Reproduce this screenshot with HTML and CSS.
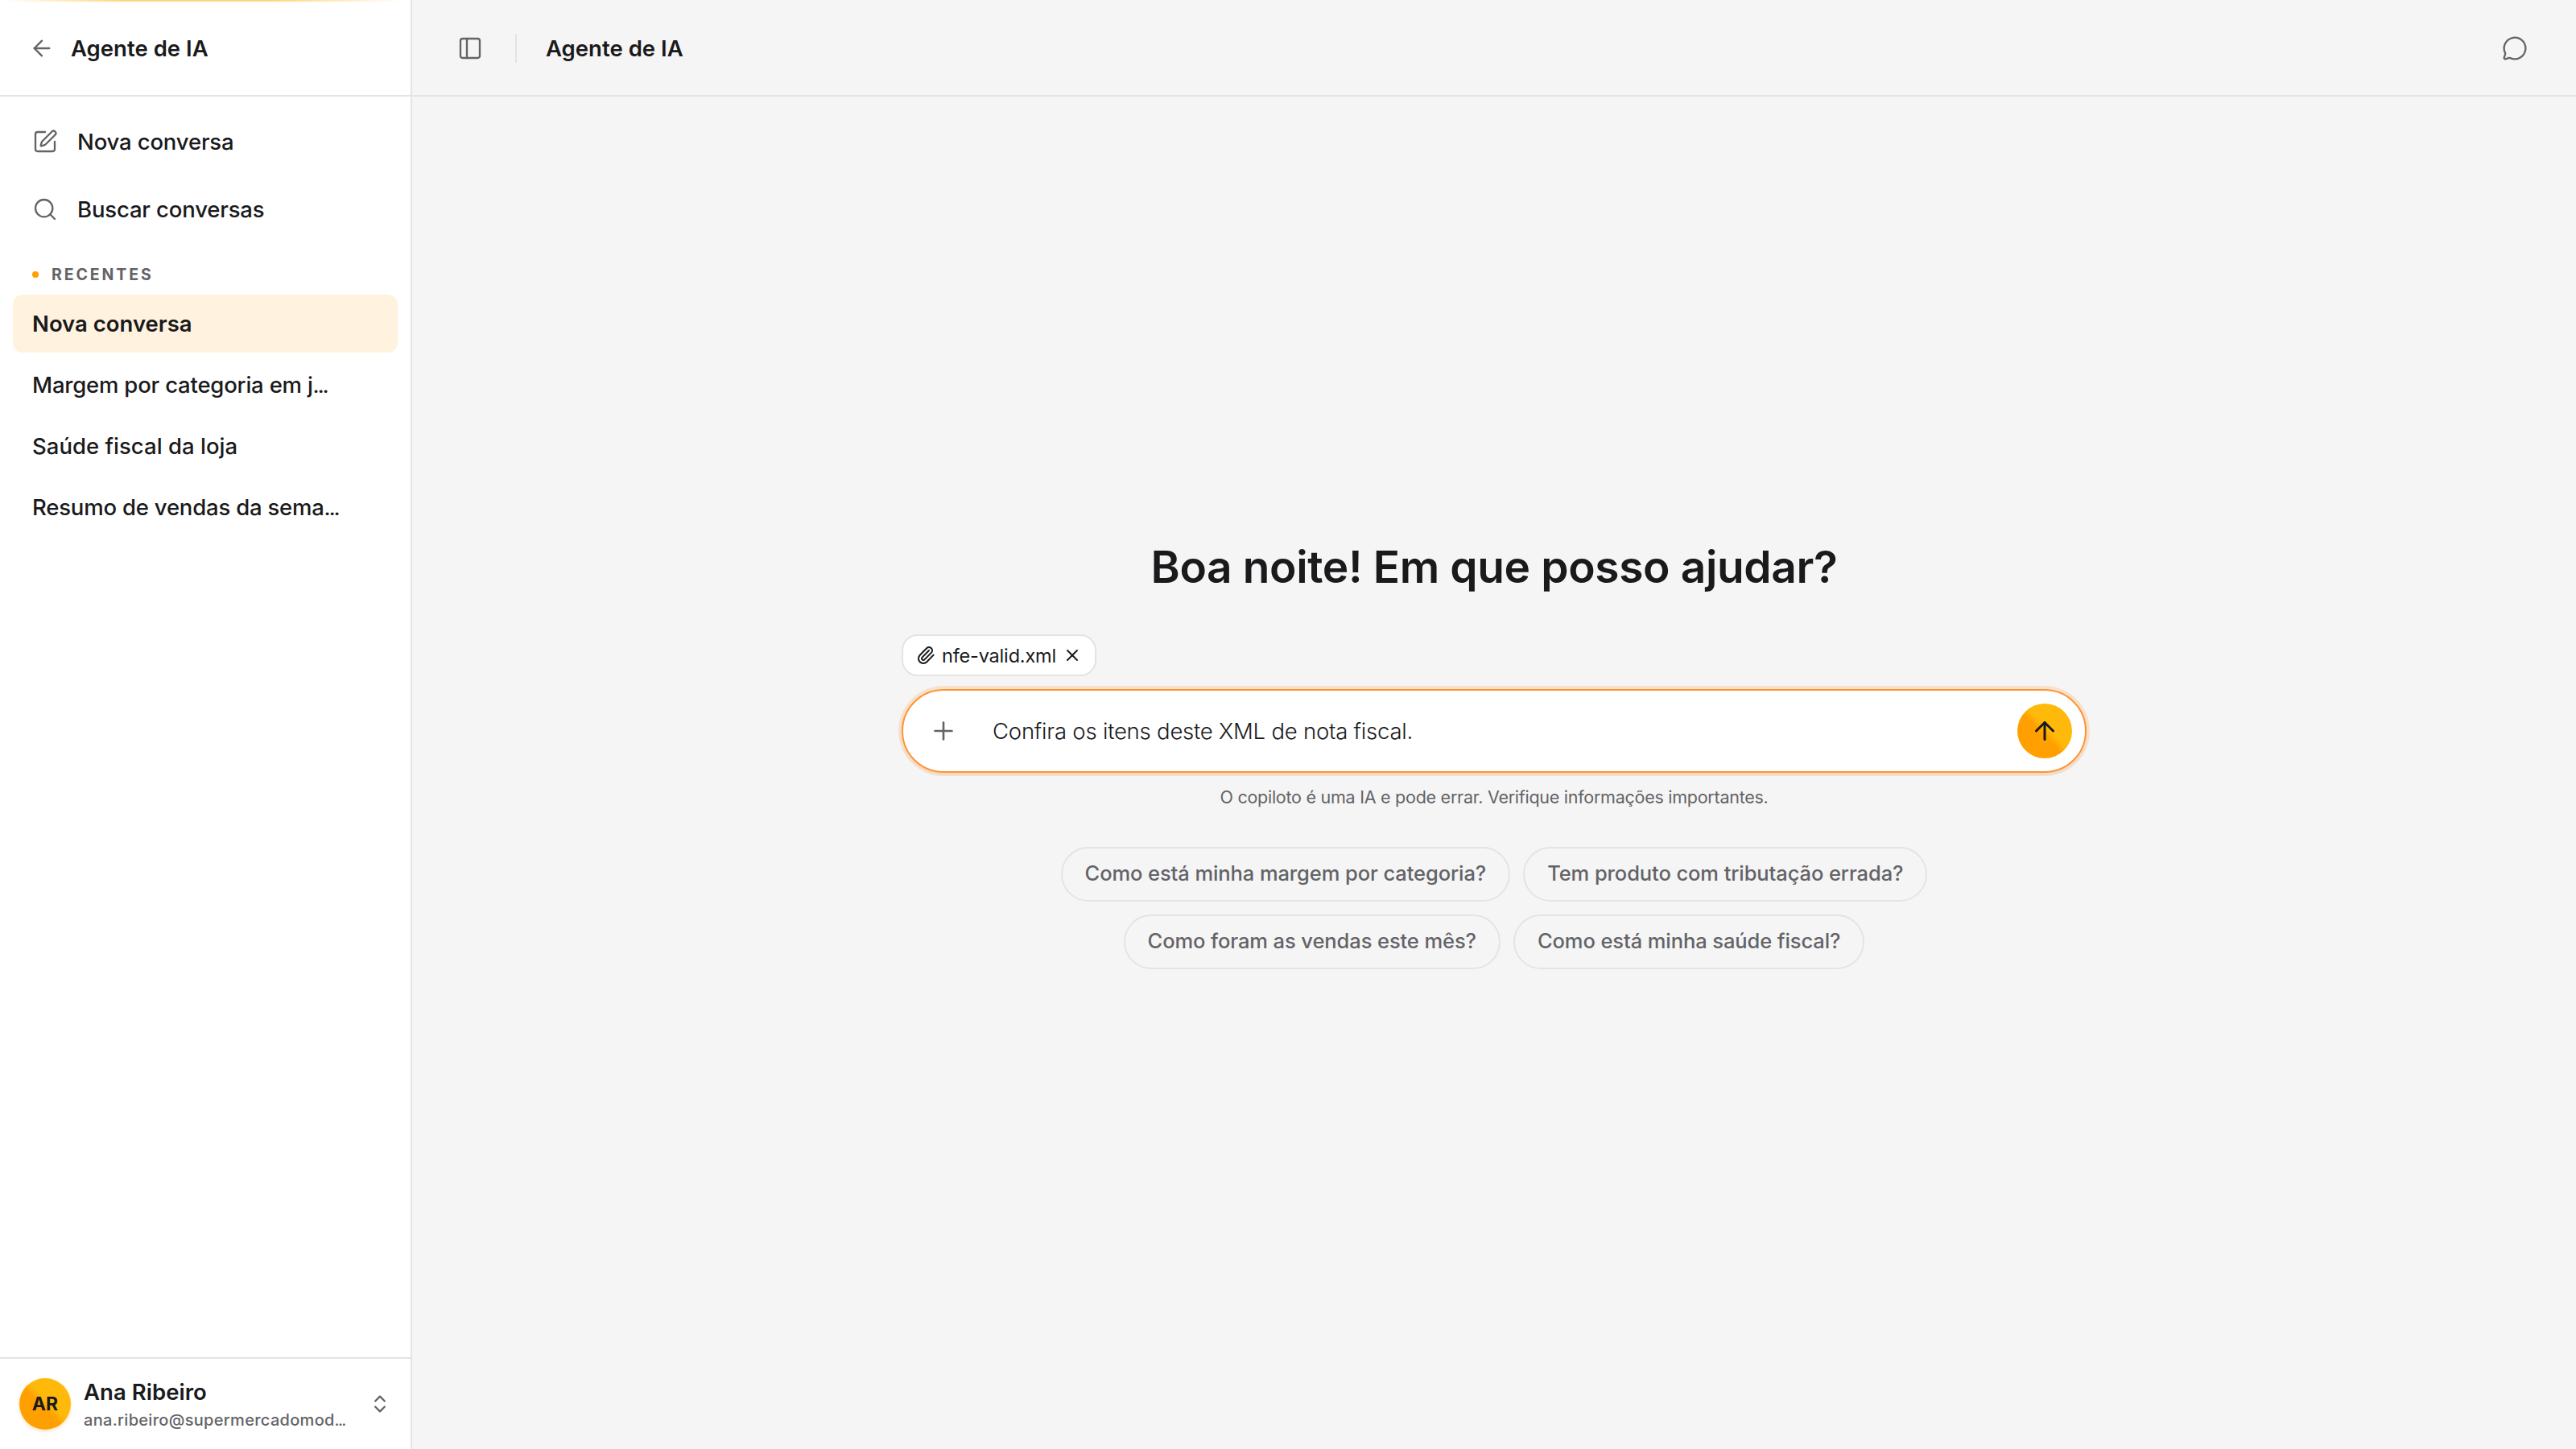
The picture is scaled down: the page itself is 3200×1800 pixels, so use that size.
FILE: index.html
```html
<!DOCTYPE html>
<html lang="pt-BR">
<head>
    <meta charset="UTF-8">
    <meta name="viewport" content="width=device-width, initial-scale=1.0">
    <title>Agente de IA</title>
    <link rel="stylesheet" href="styles.css">
</head>
<body>

    <div class="app">
        <aside class="sidebar">
            <div class="sidebar-header">
                <svg class="icon" viewBox="0 0 24 24"><path d="m12 19-7-7 7-7"/><path d="M19 12H5"/></svg>
                <span class="title">Agente de IA</span>
            </div>

            <nav class="menu">
                <a class="menu-item">
                    <svg class="icon" viewBox="0 0 24 24"><path d="M12 3H5a2 2 0 0 0-2 2v14a2 2 0 0 0 2 2h14a2 2 0 0 0 2-2v-7"/><path d="M18.375 2.625a1 1 0 0 1 3 3l-9.013 9.014a2 2 0 0 1-.853.505l-2.873.84a.5.5 0 0 1-.62-.62l.84-2.873a2 2 0 0 1 .506-.852z"/></svg>
                    <span>Nova conversa</span>
                </a>
                <a class="menu-item">
                    <svg class="icon" viewBox="0 0 24 24"><circle cx="11" cy="11" r="8"/><path d="m21 21-4.3-4.3"/></svg>
                    <span>Buscar conversas</span>
                </a>
            </nav>

            <div class="section-label">
                <span class="dot"></span>
                <span>RECENTES</span>
            </div>
            <div class="recent-list">
                <a class="recent active">Nova conversa</a>
                <a class="recent long">Margem por categoria em j<span class="ellipsis">…</span></a>
                <a class="recent">Saúde fiscal da loja</a>
                <a class="recent long">Resumo de vendas da sema<span class="ellipsis">…</span></a>
            </div>

            <div class="user">
                <div class="avatar">AR</div>
                <div class="user-info">
                    <div class="user-name">Ana Ribeiro</div>
                    <div class="user-email">ana.ribeiro@supermercadomod<span class="ellipsis">…</span></div>
                </div>
                <svg class="icon icon-sort" viewBox="0 0 24 24"><path d="m7 15 5 5 5-5"/><path d="m7 9 5-5 5 5"/></svg>
            </div>
        </aside>

        <main class="main">
            <header class="topbar">
                <svg class="icon" viewBox="0 0 24 24"><rect width="18" height="18" x="3" y="3" rx="2"/><path d="M9 3v18"/></svg>
                <span class="divider"></span>
                <span class="title">Agente de IA</span>
                <svg class="icon icon-chat" viewBox="0 0 24 24"><path d="M2.992 16.342a2 2 0 0 1 .094 1.167l-1.065 3.29a1 1 0 0 0 1.236 1.168l3.413-.998a2 2 0 0 1 1.099.092 10 10 0 1 0-4.777-4.719"/></svg>
            </header>

            <section class="chat">
                <h1 class="greeting">Boa noite! Em que posso ajudar?</h1>

                <div class="attachment">
                    <svg class="icon icon-small" viewBox="0 0 24 24"><path d="m16 6-8.414 8.586a2 2 0 0 0 2.829 2.829l8.414-8.586a4 4 0 1 0-5.657-5.657l-8.379 8.551a6 6 0 1 0 8.485 8.485l8.379-8.551"/></svg>
                    <span>nfe-valid.xml</span>
                    <svg class="icon icon-small" viewBox="0 0 24 24"><path d="M18 6 6 18"/><path d="m6 6 12 12"/></svg>
                </div>

                <div class="composer">
                    <div class="add">
                        <svg class="icon icon-large" viewBox="0 0 24 24"><path d="M5 12h14"/><path d="M12 5v14"/></svg>
                    </div>
                    <div class="message">Confira os itens deste XML de nota fiscal.</div>
                    <div class="send">
                        <svg class="icon icon-large" viewBox="0 0 24 24"><path d="m5 12 7-7 7 7"/><path d="M12 19V5"/></svg>
                    </div>
                </div>

                <p class="disclaimer">O copiloto é uma IA e pode errar. Verifique informações importantes.</p>

                <div class="suggestions">
                    <div class="suggestion">Como está minha margem por categoria?</div>
                    <div class="suggestion">Tem produto com tributação errada?</div>
                    <div class="suggestion">Como foram as vendas este mês?</div>
                    <div class="suggestion">Como está minha saúde fiscal?</div>
                </div>
            </section>
        </main>
    </div>

</body>
</html>
```
FILE: styles.css
```css
* {
    box-sizing: border-box;
}
body {
    margin: 0;
    font-family: Inter, "Liberation Sans", sans-serif;
    font-size: 27.5px;
    font-weight: 500;
    color: #1a1a1c;
    background-color: #f5f5f5;
}
.app {
    display: flex;
    height: 1800px;
}
.icon {
    width: 32px;
    height: 32px;
    flex-shrink: 0;
    fill: none;
    stroke: #636368;
    stroke-width: 1.75;
    stroke-linecap: round;
    stroke-linejoin: round;
}
.title {
    font-weight: 600;
    letter-spacing: 0.02px;
}

/* Sidebar */
.sidebar {
    display: flex;
    flex-direction: column;
    width: 512px;
    flex-shrink: 0;
    background: linear-gradient(90deg, transparent 1%, #ffd680 30%, #ffd680 66%, transparent 98%) no-repeat top / 100% 2px, #fff;
    border-right: 2px solid #e4e4e4;
}
.sidebar-header {
    display: flex;
    align-items: center;
    gap: 20px;
    height: 120px;
    padding: 2px 36px 0;
    border-bottom: 2px solid #e4e4e4;
}
.menu {
    display: flex;
    flex-direction: column;
    gap: 4px;
    padding: 16px 16px 24px;
}
.menu-item {
    display: flex;
    align-items: center;
    gap: 24px;
    height: 80px;
    padding: 0 24px;
    letter-spacing: -0.16px;
}
.section-label {
    display: flex;
    align-items: center;
    gap: 16px;
    height: 34px;
    margin-bottom: 8px;
    padding: 0 40px;
    font-size: 19.5px;
    font-weight: 700;
    letter-spacing: 2.9px;
    color: #636368;
}
.dot {
    width: 8px;
    height: 8px;
    border-radius: 50%;
    background-color: #ffa000;
}
.recent-list {
    display: flex;
    flex-direction: column;
    gap: 4px;
    padding: 0 16px;
}
.recent {
    height: 72px;
    padding: 0 24px;
    border-radius: 12px;
    line-height: 72px;
    white-space: nowrap;
    letter-spacing: 0.02px;
}
.recent.long {
    letter-spacing: -0.2px;
}
.recent.active {
    font-weight: 600;
    letter-spacing: 0;
    background-color: #fff3df;
}
.ellipsis {
    font-family: Roboto, sans-serif;
}
.user {
    display: flex;
    align-items: center;
    height: 114px;
    margin-top: auto;
    padding: 0 24px;
    border-top: 2px solid #e4e4e4;
}
.avatar {
    width: 64px;
    height: 64px;
    flex-shrink: 0;
    border-radius: 50%;
    background: linear-gradient(45deg, #ffa000 45%, #ffb90a 55%);
    box-shadow: 0 2px 4px rgba(255, 148, 0, 0.25);
    font-size: 23px;
    font-weight: 700;
    line-height: 64px;
    text-align: center;
}
.user-info {
    width: 340px;
    margin-left: 16px;
    white-space: nowrap;
}
.user-name {
    font-weight: 600;
    line-height: 40px;
    letter-spacing: 0.05px;
}
.user-email {
    font-size: 20px;
    line-height: 30px;
    letter-spacing: 0.3px;
    color: #636368;
}
.icon-sort {
    width: 28px;
    height: 28px;
    margin-left: 14px;
    stroke-width: 2;
}

/* Main area */
.main {
    display: flex;
    flex-direction: column;
    flex: 1;
}
.topbar {
    display: flex;
    align-items: center;
    height: 120px;
    padding: 2px 60px 0 56px;
    border-bottom: 2px solid #e4e4e4;
}
.divider {
    width: 2px;
    height: 36px;
    margin: 0 36px 0 40px;
    background-color: #e4e4e4;
}
.icon-chat {
    margin-left: auto;
}
.chat {
    display: flex;
    flex-direction: column;
    width: 1472px;
    margin: 0 auto;
    padding-top: 548px;
}
.greeting {
    margin: 0 0 48px;
    font-size: 55px;
    font-weight: 600;
    line-height: 72px;
    letter-spacing: -0.36px;
    text-align: center;
}
.attachment {
    display: flex;
    align-items: center;
    align-self: flex-start;
    gap: 8px;
    height: 52px;
    margin-bottom: 16px;
    padding: 0 16px;
    border: 2px solid #e4e4e4;
    border-radius: 20px;
    background-color: #fff;
    font-size: 23.5px;
    font-weight: 400;
    letter-spacing: -0.18px;
}
.icon-small {
    width: 24px;
    height: 24px;
    stroke: #1a1a1c;
    stroke-width: 2;
}
.composer {
    display: flex;
    align-items: center;
    height: 104px;
    padding: 0 16px;
    border: 2px solid #ff9433;
    border-radius: 52px;
    background-color: #fff;
    box-shadow: 0 0 0 4px rgba(255, 148, 51, 0.2), 0 2px 4px rgba(0, 0, 0, 0.05);
}
.add,
.send {
    display: flex;
    align-items: center;
    justify-content: center;
    width: 68px;
    height: 68px;
}
.icon-large {
    width: 36px;
    height: 36px;
}
.message {
    flex: 1;
    padding-left: 27px;
    font-weight: 300;
    letter-spacing: -0.22px;
}
.send {
    border-radius: 50%;
    background: linear-gradient(45deg, #ffa000 45%, #ffb90a 55%);
}
.send .icon {
    stroke: #1a1a1c;
    stroke-width: 2;
}
.disclaimer {
    margin: 12px 0 44px;
    font-size: 21.5px;
    font-weight: 400;
    line-height: 36px;
    letter-spacing: -0.26px;
    text-align: center;
    color: #636368;
}
.suggestions {
    display: flex;
    flex-wrap: wrap;
    justify-content: center;
    gap: 16px;
    padding: 0 180px;
}
.suggestion {
    height: 68px;
    padding: 0 28px;
    border: 2px solid #e4e4e4;
    border-radius: 34px;
    font-size: 25.5px;
    line-height: 62px;
    letter-spacing: -0.09px;
    white-space: nowrap;
    color: #636368;
}
```
